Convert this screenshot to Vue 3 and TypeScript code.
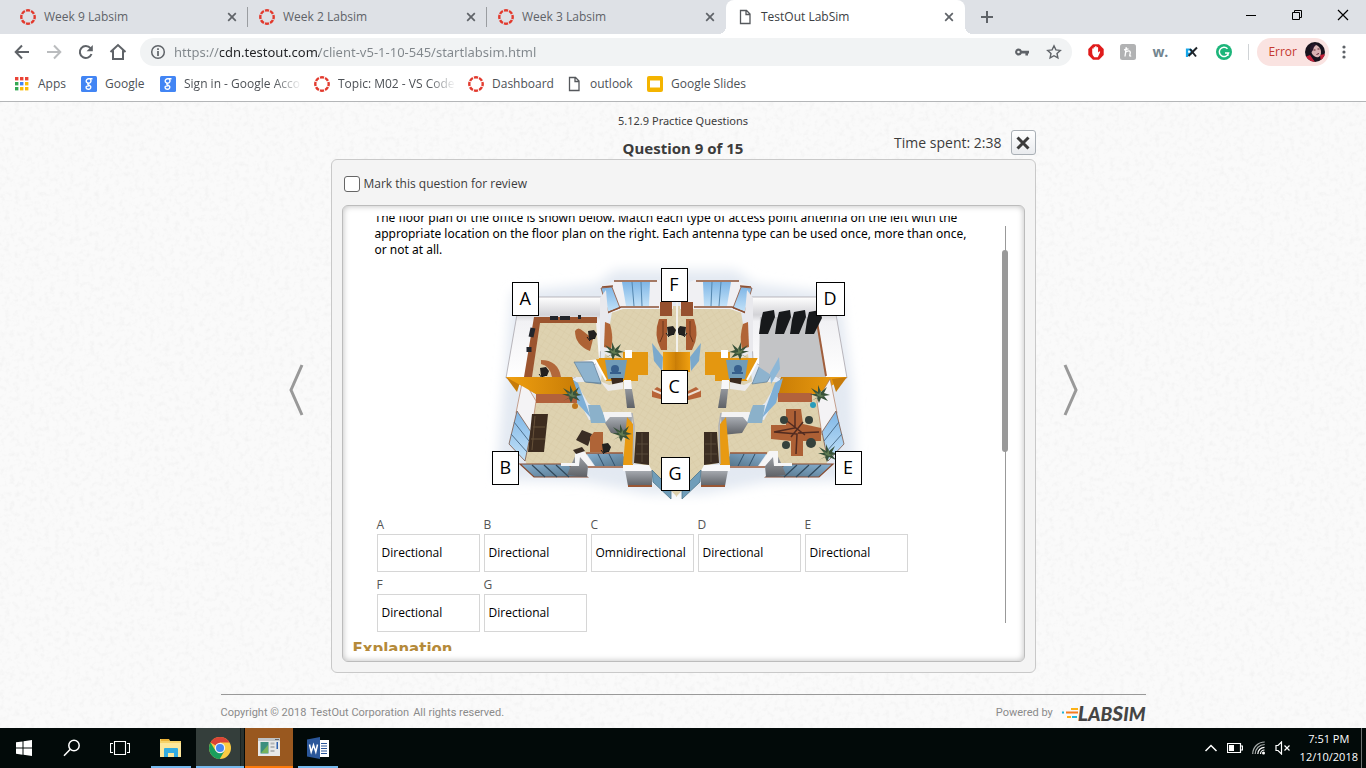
<script setup lang="ts">
import { ref } from 'vue'

interface Tab { title: string; icon: 'canvas' | 'page'; active?: boolean }
interface Bookmark { title: string; icon: string; faded?: boolean }
interface Pin { name: string; x: number; y: number }
interface Answer { slot: string; value: string }

const tabs: Tab[] = [
  { title: 'Week 9 Labsim', icon: 'canvas' },
  { title: 'Week 2 Labsim', icon: 'canvas' },
  { title: 'Week 3 Labsim', icon: 'canvas' },
  { title: 'TestOut LabSim', icon: 'page', active: true },
]
const bookmarks: Bookmark[] = [
  { title: 'Apps', icon: 'apps' },
  { title: 'Google', icon: 'google' },
  { title: 'Sign in - Google Acco', icon: 'google', faded: true },
  { title: 'Topic: M02 - VS Code', icon: 'canvas', faded: true },
  { title: 'Dashboard', icon: 'canvas' },
  { title: 'outlook', icon: 'page' },
  { title: 'Google Slides', icon: 'slides' },
]
const appColors = ['#ea4335', '#ea4335', '#ea4335', '#34a853', '#4285f4', '#fbbc05', '#34a853', '#fbbc05', '#fbbc05']
// Marker offsets on the floor plan canvas
const pins: Pin[] = [
  { name: 'A', x: 27, y: 22 },
  { name: 'B', x: 7, y: 191 },
  { name: 'C', x: 176, y: 110 },
  { name: 'D', x: 331, y: 22 },
  { name: 'E', x: 350, y: 191 },
  { name: 'F', x: 176, y: 8 },
  { name: 'G', x: 176, y: 197 },
]
const answers: Answer[] = [
  { slot: 'A', value: 'Directional' },
  { slot: 'B', value: 'Directional' },
  { slot: 'C', value: 'Omnidirectional' },
  { slot: 'D', value: 'Directional' },
  { slot: 'E', value: 'Directional' },
  { slot: 'F', value: 'Directional' },
  { slot: 'G', value: 'Directional' },
]
const url = ref('https://cdn.testout.com/client-v5-1-10-545/startlabsim.html')
const marked = ref(false)
</script>

<template>
  <div class="screen">
    <svg class="defs" width="0" height="0" aria-hidden="true">
      <symbol id="i-canvas" viewBox="0 0 16 16">
        <circle cx="8" cy="8" r="6.7" fill="none" stroke="#e23a2e" stroke-width="2.4" pathLength="80" stroke-dasharray="7.8 2.2" stroke-dashoffset="-1.1" transform="rotate(22.5 8 8)" />
      </symbol>
      <symbol id="i-page" viewBox="0 0 16 16">
        <path d="M3.5 1.500h6l3.500 3.500v9.500h-9.500zM9 1.500v4h4" fill="#fff" stroke="#55585c" stroke-width="1.3" />
      </symbol>
      <symbol id="i-google" viewBox="0 0 16 16">
        <rect width="16" height="16" rx="1.500" fill="#4285f4" />
        <path d="M11.500 2.800H7.600a2.400 2.200 0 1 0 0 4.400a2.200 2.200 0 0 0 1.600-3.900M7.300 7.200c-1.600 1.300.6 1.700 1.800 2.600c1.700 1.500.2 3.500-1.900 3.500s-3-2.300-1.200-3.100c.8-.4 1.700-.5 2.400-.5" fill="none" stroke="#fff" stroke-width="1.400" />
      </symbol>
      <symbol id="i-slides" viewBox="0 0 16 16">
        <rect width="16" height="16" rx="2" fill="#f4b400" /><rect x="3" y="4.500" width="10" height="7" fill="#fff" />
      </symbol>
      <symbol id="i-close" viewBox="0 0 16 16">
        <path d="M4.200 4.200l7.600 7.600M11.800 4.200l-7.600 7.600" stroke="#5f6368" stroke-width="1.700" />
      </symbol>
    </svg>

    <header class="browser">
      <div class="tabstrip">
        <div v-for="(t, i) in tabs" :key="i" class="tab" :class="{ active: t.active, ruled: i < 2 }">
          <svg class="ico"><use :href="'#i-' + t.icon" /></svg>
          <a class="tab-title" href="#">{{ t.title }}</a>
          <button class="plain" :aria-label="'Close ' + t.title"><svg class="ico"><use href="#i-close" /></svg></button>
        </div>
        <button class="plain newtab" aria-label="New tab">
          <svg width="14" height="14" viewBox="0 0 14 14"><path d="M7 1v12M1 7h12" stroke="#5f6368" stroke-width="2" /></svg>
        </button>
        <div class="wincontrols">
          <button class="plain" aria-label="Minimize"><svg width="12" height="12"><path d="M1 6.500h10" stroke="#000" /></svg></button>
          <button class="plain" aria-label="Restore"><svg width="12" height="12"><path d="M1.500 3.500h7v7h-7zM3.500 3.500v-2h7v7h-2" fill="none" stroke="#000" /></svg></button>
          <button class="plain" aria-label="Close"><svg width="12" height="12"><path d="M1 1l10 10M11 1L1 11" stroke="#000" stroke-width="1.200" /></svg></button>
        </div>
      </div>

      <div class="toolbar">
        <button class="plain nav" aria-label="Back"><svg width="16" height="16"><path d="M15 8H2M8 1.500L1.700 8L8 14.500" fill="none" stroke="#5f6368" stroke-width="2" /></svg></button>
        <button class="plain nav" aria-label="Forward"><svg width="16" height="16"><path d="M1 8h13M8 1.500L14.300 8L8 14.500" fill="none" stroke="#babcbe" stroke-width="2" /></svg></button>
        <button class="plain nav" aria-label="Reload"><svg width="16" height="16"><path d="M13.500 10A6 6 0 1 1 12.500 4.200" fill="none" stroke="#5f6368" stroke-width="2" /><path d="M14.800 1v6.200H8.600z" fill="#5f6368" /></svg></button>
        <button class="plain nav" aria-label="Home"><svg width="18" height="18"><path d="M1.500 9L9 2l7.500 7M4 7.500V16h10V7.500" fill="none" stroke="#5f6368" stroke-width="2" /></svg></button>
        <div class="omnibox">
          <svg width="16" height="16"><circle cx="8" cy="8" r="6.300" fill="none" stroke="#5f6368" stroke-width="1.500" /><path d="M8 4.200v1.800M8 7v5" stroke="#5f6368" stroke-width="1.700" /></svg>
          <input v-model="url" class="url" aria-label="Address" />
          <button class="plain" aria-label="Saved password"><svg width="16" height="16"><path fill-rule="evenodd" d="M4.500 4.500a3.500 3.500 0 0 1 3.300 2.200H15v2.700h-1V11.500h-2.600V9.400H7.800A3.500 3.500 0 1 1 4.500 4.500zm0 2.200a1.300 1.300 0 1 0 0 2.600a1.300 1.300 0 0 0 0-2.600z" fill="#5f6368" /></svg></button>
          <button class="plain" aria-label="Bookmark this page"><svg width="16" height="16"><path d="M8 1.800l1.900 4.100l4.400.5l-3.300 3l.9 4.500L8 11.700l-3.900 2.200l.9-4.500l-3.300-3l4.400-.5z" fill="none" stroke="#5f6368" stroke-width="1.400" /></svg></button>
        </div>
        <div class="extensions">
          <button class="plain" aria-label="Ad blocker"><svg width="16" height="16"><path d="M5 .3h6L15.700 5v6L11 15.700H5L.3 11V5z" fill="#e01b1b" /><path d="M4.200 9V4.800q.7-1 1.400 0V3.400q.8-1 1.500 0v-.8q.8-1 1.500 0v1q.8-1 1.500 0v4.800l1.400-1.200q1.100.3.500 1.200L9.800 13.300H6.300Q4.200 11.500 4.200 9z" fill="#fff" /></svg></button>
          <button class="plain" aria-label="Honey"><svg width="16" height="16"><rect width="16" height="16" rx="2.500" fill="#b1b2b3" /><path d="M6.300 3.200L5 12.500M5.900 8q4-2.400 4.400.4l-.6 3.200q.3.900 1.500.2M4 5.800l4.500-.9" fill="none" stroke="#fff" stroke-width="1.300" /></svg></button>
          <button class="plain" aria-label="Wikibuy"><span class="wletter">w.</span></button>
          <button class="plain" aria-label="px"><svg width="16" height="16"><path d="M3 13V5.500h2.500a2 2 0 0 1 0 4.300H3.500" fill="none" stroke="#18a7ea" stroke-width="2.200" /><path d="M6 5l6 7.500M13 3.500L4.500 12" stroke="#20252a" stroke-width="2" /></svg></button>
          <button class="plain" aria-label="Grammarly"><svg width="16" height="16"><circle cx="8" cy="8" r="8" fill="#1cb57a" /><path d="M11.500 4.700A4.700 4.700 0 1 0 12.600 9H9M12 8.600l-.2 3.400" fill="none" stroke="#fff" stroke-width="1.500" /></svg></button>
        </div>
        <button class="profile">
          <span>Error</span>
          <svg width="20" height="20"><defs><clipPath id="face"><circle cx="10" cy="10" r="10" /></clipPath></defs><g clip-path="url(#face)"><rect width="20" height="20" fill="#18131d" /><path d="M0 15l5-2l5 7H0zM15 13l5-1v6l-4 2z" fill="#c51f38" /><ellipse cx="11" cy="9" rx="4.800" ry="6.500" transform="rotate(-24 11 9)" fill="#dab3b2" /><path d="M5 6q1-5 7-4q-3 2-4 6l-2 3z" fill="#28182a" /><path d="M8.500 8h2M12.500 7h2M11.500 12.500l2.500-1" stroke="#5c2233" /></g></svg>
        </button>
        <button class="plain kebab" aria-label="Menu"><svg width="4" height="16"><circle cx="2" cy="3" r="1.600" fill="#5f6368" /><circle cx="2" cy="8" r="1.600" fill="#5f6368" /><circle cx="2" cy="13" r="1.600" fill="#5f6368" /></svg></button>
      </div>

      <nav class="bookmarks">
        <a v-for="b in bookmarks" :key="b.title" href="#" class="bookmark">
          <svg v-if="b.icon === 'apps'" class="ico" viewBox="0 0 16 16">
            <rect v-for="(c, i) in appColors" :key="i" :x="1 + (i % 3) * 5" :y="1 + Math.floor(i / 3) * 5" width="3.400" height="3.400" :fill="c" />
          </svg>
          <svg v-else class="ico"><use :href="'#i-' + b.icon" /></svg>
          <span :class="{ faded: b.faded }">{{ b.title }}</span>
        </a>
      </nav>
    </header>

    <main class="page">
      <svg class="grain" aria-hidden="true">
        <filter id="paper"><feTurbulence type="fractalNoise" baseFrequency="0.2" numOctaves="3" seed="4" /><feColorMatrix values="0 0 0 0 0.5  0 0 0 0 0.5  0 0 0 0 0.5  0.26 0 0 0 -0.12" /></filter>
        <rect width="100%" height="100%" filter="url(#paper)" />
      </svg>
      <div class="stage">
        <button class="plain arrow" aria-label="Previous question"><svg width="16" height="52"><path d="M14 1L3 26l11 25" fill="none" stroke="#999" stroke-width="3" /></svg></button>
        <section class="quiz">
          <div class="heading">
            <div class="titles"><div class="crumb">5.12.9 Practice Questions</div><h1>Question 9 of 15</h1></div>
            <div class="timer">
              <span>Time spent: 2:38</span>
              <button class="closebox" aria-label="Close"><svg width="14" height="14"><path d="M1.500 1.500l11 11M12.500 1.500l-11 11" stroke="#3c3c3c" stroke-width="3" /></svg></button>
            </div>
          </div>
          <div class="panel">
            <label class="review"><input v-model="marked" type="checkbox" /><span>Mark this question for review</span></label>
            <div class="card">
              <div class="content">
                <p>The floor plan of the office is shown below. Match each type of access point antenna on the left with the appropriate location on the floor plan on the right. Each antenna type can be used once, more than once, or not at all.</p>
                <div class="plan">
                  <svg class="plan-art" width="390" height="245" viewBox="485 260 390 245">
                    <defs>
                      <filter id="soft" x="-10%" y="-10%" width="120%" height="120%"><feGaussianBlur stdDeviation="6" /></filter>
                      <linearGradient id="wall" x1="0" y1="0" x2="0" y2="1"><stop offset="0" stop-color="#fff" /><stop offset=".22" stop-color="#d3d3d7" /><stop offset=".3" stop-color="#f1f1f4" /><stop offset="1" stop-color="#fff" /></linearGradient>
                      <linearGradient id="steel" x1="0" y1="0" x2="0" y2="1"><stop offset="0" stop-color="#a9adb3" /><stop offset="1" stop-color="#5f6267" /></linearGradient>
                      <linearGradient id="glass" x1="0" y1="0" x2="0" y2="1"><stop offset="0" stop-color="#7fb6e6" /><stop offset="1" stop-color="#c3e2f8" /></linearGradient>
                      <linearGradient id="dim" x1="0" y1="0" x2="1" y2="1"><stop offset="0" stop-color="#86b0d1" /><stop offset="1" stop-color="#557489" /></linearGradient>
                      <linearGradient id="amber" x1="0" y1="0" x2="1" y2="0"><stop offset="0" stop-color="#f0a010" /><stop offset="1" stop-color="#c87c06" /></linearGradient>
                      <pattern id="tile" width="6" height="6" patternUnits="userSpaceOnUse" patternTransform="rotate(32)"><rect width="6" height="6" fill="#ded2b0" /><path d="M0 0h6M0 0v6" stroke="#d2c5a0" stroke-width=".7" /></pattern>
                      <g id="plant"><path d="M0 0l-8-3l6 0l-5-6l7 4l0-7l3 7l6-5l-3 6l6 2l-6 1l4 5l-7-3l-2 5l-2-5l-6 3z" fill="#38523a" /><path d="M0-1l-3-4l4 2l2-4l0 5l4 1l-4 1z" fill="#5f7a52" /></g>
                      <g id="chair"><path d="M-4-4l6-1l3 4l-2 5l-6 0z" fill="#23211f" /><path d="M-3 5l6-2M-5 2l3 4" stroke="#15181b" /></g>
                      <g id="half">
                        <!-- corner office -->
                        <path d="M520 297h83l-3 64l-26 17h-68z" fill="url(#wall)" stroke="#a9a6ac" stroke-width=".8" />
                        <!-- lobby and inner office floors -->
                        <path d="M612 312l15-6h50v80h-77l6-38z" fill="url(#tile)" />
                        <path d="M576 382h101v115l-29-31l-14-3l-2-50h-29l-15-10z" fill="url(#tile)" />
                        <!-- lower office -->
                        <path d="M536 395h40l13 25h16l27 17v18h-50l-10 10h-45l-3-7l8-33z" fill="url(#tile)" />
                        <!-- central office windows -->
                        <path d="M602 287l14-7h43l14 7v22h-50l-15 5z" fill="#f0f0f3" />
                        <path d="M601 288l11-1l8 21l-12 4z" fill="url(#glass)" stroke="#8f5133" stroke-width=".8" />
                        <path d="M622 282h28l-1 24h-23z" fill="url(#glass)" />
                        <path d="M632 282l2 24M641 282l1 24" stroke="#5587af" stroke-width="1" />
                        <path d="M614 281h43M602 287l11-1M607 313l14-6h38" fill="none" stroke="#8b5034" stroke-width="1.500" />
                        <path d="M600 298l6-8l6 68l-12-7z" fill="#e9e9ed" />
                        <path d="M605 322l5 2q4 13 1 25l-7-2z" fill="#b16537" />
                        <rect x="660" y="302" width="12" height="14" fill="#96502e" />
                        <path d="M659 319h8v31h-6q-8-15-2-31z" fill="#a85a30" /><path d="M663 321v14l-3 7" stroke="#6b361c" fill="none" />
                        <use href="#chair" x="671" y="331" />
                        <!-- amber partitions -->
                        <path d="M595 358h28v-6h25v23h-10v6h-32z" fill="#e49710" />
                        <path d="M605 360h22l-3 19h-16z" fill="#719cb8" /><circle cx="615" cy="369" r="4" fill="#365f8d" /><path d="M610 373h11" stroke="#365f8d" stroke-width="2" />
                        <path d="M594 358l12 22" stroke="#fff" stroke-width="2" />
                        <rect x="625" y="350" width="7" height="8" fill="#fff" />
                        <use href="#plant" x="612" y="354" />
                        <path d="M652 343l11 14l-1 14l-8-10z" fill="#7ba9cc" />
                        <rect x="663" y="352" width="15" height="20" fill="url(#amber)" />
                        <path d="M574 362h18l9 22l-15-2z" fill="#8eb3ce" stroke="#58748c" stroke-width=".6" />
                        <path d="M611 378h12v10h-10z" fill="#3b2a20" />
                        <path d="M600 381l9 4l14-3v7l-15 2z" fill="#eceae9" />
                        <!-- amber divider between the corner offices -->
                        <path d="M506 377h66l6 17h-42l-14-8z" fill="url(#amber)" />
                        <path d="M506 377l15 2l-4 13z" fill="#c77b0a" />
                        <path d="M570 378l8 5l13 35l-14-15z" fill="#7eafd7" />
                        <path d="M523 379l13 22l-5 34l-15-22l5-25z" fill="#f4f3f5" stroke="#a86a48" stroke-width=".6" />
                        <path d="M517 411l14 21l-6 29l-16-17z" fill="url(#glass)" stroke="#7c5848" stroke-width=".8" />
                        <path d="M514 422l15 19M511 434l16 18" stroke="#4f718e" stroke-width="1" />
                        <path d="M588 405h12l7 18h-16z" fill="#8bb1ca" />
                        <path d="M624 381l7 2l4 25h-8z" fill="url(#steel)" /><path d="M624 380h7l1 9h-8z" fill="#f7f7f8" />
                        <path d="M603 412h28l2 6h-22l-5 5z" fill="#f3f3f4" /><path d="M610 417h22l-1 18l-20-2l-6-10z" fill="url(#steel)" />
                        <path d="M520 464h47l20 13h-53z" fill="url(#dim)" stroke="#874b30" stroke-width="1.200" />
                        <path d="M532 465l13 12M544 465l13 12M556 465l13 12" stroke="#31495b" stroke-width="1.200" />
                        <path d="M577 452l11 14l-1 11l-20-2l5-12z" fill="url(#steel)" /><path d="M561 463h14v-12h9l10 15h-6l-8-9l-1 9h-18z" fill="#f5f5f6" />
                        <path d="M586 453h37l3 13h-31z" fill="url(#dim)" /><path d="M586 453h37M588 467h36" stroke="#9b5838" stroke-width="1.300" /><path d="M598 454l6 12M609 454l6 12" stroke="#304f69" />
                        <path d="M627 417l6 7v41h-10z" fill="#e89a12" /><path d="M632 413l2 13l-1 38" fill="none" stroke="#afb1b5" stroke-width="1.500" />
                        <path d="M636 432h13v33l-15-2z" fill="#3b2d22" /><path d="M642 433v29M637 444h11M636 454h12" stroke="#60503f" stroke-width=".8" />
                        <path d="M625 470h27v16h-24z" fill="url(#steel)" /><path d="M623 465h26l3 6h-29z" fill="#f8f8f9" /><path d="M628 486h24" stroke="#9b5734" stroke-width="2" />
                        <path d="M652 470l10 10l9 10v9l-18-17z" fill="#6f9dba" stroke="#4e7589" stroke-width=".8" />
                        <path d="M652 391l5-4l20 10v6l-25-6z" fill="#b86438" /><path d="M653 390l12 5" stroke="#ece1d5" stroke-width="2" />
                      </g>
                    </defs>
                    <path d="M512 292l85-8l18-14h120l20 14l85 10l12 90l4 96l-90 2l-62 12h-56l-62-12l-90-2l8-96z" fill="#e3e9f2" filter="url(#soft)" />
                    <use href="#half" />
                    <use href="#half" transform="translate(1353 0) scale(-1 1)" />
                    <path d="M677 302v50" stroke="#f3f1ec" stroke-width="2" />
                    <!-- office A -->
                    <path d="M539 322h57l3 37l-24 3l8 15h-56z" fill="url(#tile)" />
                    <path d="M534 317h63v6h-57l-8 54h-8z" fill="#9c552f" />
                    <path d="M550 318h8M560 318h10M578 317h3" stroke="#22252b" stroke-width="4" /><path d="M533 328l-2 9M529 347v5" stroke="#22252b" stroke-width="5" />
                    <path d="M575 331q3-5 8 0l10 8l-3 12q-15-6-15-20z" fill="#ad6235" /><use href="#chair" x="592" y="335" />
                    <path d="M541 360q17 0 20 17h-9q-2-11-11-13z" fill="#b2683b" /><use href="#chair" x="544" y="372" />
                    <path d="M574 362h19l8 21l-16-1z" fill="#8eb3ce" stroke="#58748c" stroke-width=".6" />
                    <path d="M506 377h66l6 17h-42l-14-8z" fill="url(#amber)" />
                    <!-- office D -->
                    <path d="M760 317h57l9 60h-52l-15-10z" fill="#c3c4c6" />
                    <path d="M817 322l9 54" stroke="#a15f3d" stroke-width="2" />
                    <path d="M763 312l11-2l1 7l-7 17h-9l2-14zM779 312l11-2l1 7l-7 17h-9l2-14zM794 312l11-2l1 7l-7 17h-9l2-14zM809 312l11-2l2 8l-8 16h-9l2-14z" fill="#17191b" />
                    <path d="M779 357l1 12l-9 15l-1-11z" fill="#8db7d7" />
                    <!-- office B furniture -->
                    <path d="M532 414h16l-4 38h-16z" fill="#3d2c1f" /><path d="M535 416l-3 34M533 427h12M531 439h14" stroke="#655039" />
                    <path d="M536 394h41v9h-41z" fill="#b2623c" /><use href="#plant" x="570" y="397" /><circle cx="575" cy="406" r="3" fill="#bf751b" />
                    <path d="M582 430l10 4l-4 12l-12-6z" fill="#3a2d24" /><path d="M590 437l4-5h9v20h-13z" fill="#af6437" /><use href="#chair" x="606" y="448" /><use href="#plant" x="620" y="436" />
                    <path d="M573 450l9-3l3 4l-9 3z" fill="#3a2d24" />
                    <!-- office E furniture -->
                    <path d="M778 393h34v9h-34z" fill="#b2623c" /><use href="#plant" x="818" y="397" /><circle cx="813" cy="405" r="3" fill="#2b9cba" />
                    <path d="M786 409h15l2 15l18 4v13h-18v15h-12v-15l-20-2v-14h15z" fill="#ad6035" />
                    <path d="M795 411v17l-21 4l23 2l-1 20M798 433l21-1M787 421l18 14M803 422l-12 15" stroke="#512b20" stroke-width="1.500" fill="none" />
                    <g fill="#35413b"><circle cx="784" cy="420" r="4" /><circle cx="809" cy="420" r="4" /><circle cx="786" cy="445" r="4" /><circle cx="811" cy="443" r="5" /></g>
                    <use href="#plant" x="826" y="456" />
                  </svg>
                  <span v-for="p in pins" :key="p.name" class="pin" :style="{ left: p.x + 'px', top: p.y + 'px' }">{{ p.name }}</span>
                </div>
                <div class="answers">
                  <div v-for="a in answers" :key="a.slot" class="answer"><span class="slot">{{ a.slot }}</span><div class="drop">{{ a.value }}</div></div>
                </div>
                <h2>Explanation</h2>
              </div>
              <div class="rail"><div class="thumb"></div></div>
            </div>
          </div>
        </section>
        <button class="plain arrow" aria-label="Next question"><svg width="16" height="52"><path d="M2 1l11 25L2 51" fill="none" stroke="#999" stroke-width="3" /></svg></button>
      </div>
      <footer class="foot">
        <span class="copy"><span>Copyright © 2018</span><span>TestOut Corporation</span><span>All rights reserved.</span></span>
        <span class="powered">Powered by
          <span class="logo"><svg width="16" height="14"><path d="M0 6.500h2" stroke="#20b5d8" stroke-width="2" /><path d="M9 3h7" stroke="#fbb116" stroke-width="2" /><path d="M4 6.500h12" stroke="#f47b20" stroke-width="2" /><path d="M5 11h4" stroke="#fbb116" stroke-width="2" /><path d="M10 11h5" stroke="#20b5d8" stroke-width="2" /></svg><b><i>L</i>AB<i>S</i>IM</b></span>
        </span>
      </footer>
    </main>

    <div class="taskbar">
      <button class="task" aria-label="Start"><svg width="16" height="16"><path d="M0 2.300L6.500 1.400v6.200H0zM7.500 1.200L16 0v7.600H7.500zM0 8.500h6.500v6.200L0 13.800zM7.500 8.500H16V16l-8.500-1.200z" fill="#fff" /></svg></button>
      <button class="task" aria-label="Search"><svg width="18" height="18"><circle cx="11" cy="6.500" r="5.200" fill="none" stroke="#fff" stroke-width="1.500" /><path d="M7.300 10.300L1 16.700" stroke="#fff" stroke-width="1.600" /></svg></button>
      <button class="task" aria-label="Task view"><svg width="20" height="14"><path d="M4.500.5h11v13h-11zM3 2.500H.5v9H3M17 2.500h2.500v9H17" fill="none" stroke="#fff" stroke-width="1.100" /></svg></button>
      <button class="task open" aria-label="File Explorer"><svg width="22" height="20"><path d="M0 1h9l1 2h11v16H0z" fill="#f7d36a" /><path d="M0 5h21v14H0z" fill="#fde79b" /><path d="M1 2h8" stroke="#e8a928" stroke-width="1.500" /><path d="M4 19v-8q0-1 1-1h12q1 0 1 1v8h-4v-4H8v4z" fill="#34ace0" /></svg></button>
      <button class="task open running" aria-label="Chrome"><svg width="22" height="22" viewBox="0 0 22 22"><circle cx="11" cy="11" r="11" fill="#fbcb43" /><path d="M11 11L1.500 5.500A11 11 0 0 1 20.600 5.600H11z" fill="#da4437" /><path d="M1.500 5.500A11 11 0 0 0 10.800 22l4.700-8.300L11 11L6.500 13.700z" fill="#1a9e5c" /><circle cx="11" cy="11" r="5.200" fill="#f3f3f3" /><circle cx="11" cy="11" r="4" fill="#4587f3" /></svg></button>
      <button class="task alert" aria-label="LabSim"><svg width="22" height="18"><rect width="22" height="18" fill="#e7e8e8" /><path d="M0 0h22v3H0z" fill="#bfc3c5" /><path d="M17 1.500h4" stroke="#666" /><rect x="2.500" y="4" width="8" height="11.500" fill="#3b8f7e" /><path d="M3 15l7-8v8z" fill="#76b35c" /><path d="M12.500 5.500h4M12.500 9h4M12.500 13h4" stroke="#b3b6b8" stroke-width="2" /><rect x="18.500" y="4" width="1.500" height="7" fill="#2f62b0" /></svg></button>
      <button class="task open" aria-label="Word"><svg class="word" width="22" height="22"><path d="M11 3h11v17H11z" fill="#fff" /><path d="M14 6.500h6M14 9h6M14 11.500h6M14 14h6M14 16.500h6" stroke="#2b579a" stroke-width="1.200" /><path d="M0 2.500L13 0v22L0 19.500z" fill="#2b579a" /><path d="M2.500 7.500l1.700 7.500l2.300-7l2.300 7l1.700-7.500" fill="none" stroke="#fff" stroke-width="1.500" /></svg></button>
      <div class="tray">
        <button class="plain" aria-label="Show hidden icons"><svg width="14" height="10"><path d="M1.500 8L7 2.500L12.500 8" fill="none" stroke="#fff" stroke-width="1.500" /></svg></button>
        <button class="plain" aria-label="Battery"><svg width="16" height="10"><path d="M.5.500h13v9H.500zM14 3h1.500v4H14" fill="none" stroke="#fff" stroke-width="1.200" /><rect x="2" y="2" width="5" height="6" fill="#fff" /></svg></button>
        <button class="plain" aria-label="Network"><svg width="14" height="14"><g fill="none"><path d="M8.500 13a4 4 0 0 1 4-4M5.800 13a6.700 6.700 0 0 1 6.700-6.700" stroke="#fff" stroke-width="1.200" /><path d="M3.200 13a9.500 9.500 0 0 1 9.500-9.500M.7 13A12 12 0 0 1 12.700 1" stroke="#a8adac" stroke-width="1.200" /></g><circle cx="11.500" cy="12" r="1.500" fill="#fff" /></svg></button>
        <button class="plain" aria-label="Volume muted"><svg width="16" height="14"><path d="M1 4.500h2L6.500 1v12L3 9.500H1z" fill="none" stroke="#fff" stroke-width="1.200" /><path d="M9.500 4.500l5 5M14.500 4.500l-5 5" stroke="#fff" stroke-width="1.200" /></svg></button>
        <button class="clock"><span>7:51 PM</span><span>12/10/2018</span></button>
      </div>
    </div>
  </div>
</template>

<style>
body { margin: 0; }
</style>

<style scoped>
.screen { display: flex; flex-direction: column; height: 100vh; overflow: hidden; background: #fff; font: 12px/16px "Open Sans", "Noto Sans", sans-serif; color: #3c4043; }
.screen * { box-sizing: border-box; }
.defs { position: absolute; }
svg { display: block; flex: none; }
.ico { width: 16px; height: 16px; }
a { color: inherit; text-decoration: none; }
button { font: inherit; color: inherit; cursor: pointer; }
.plain { display: flex; align-items: center; justify-content: center; padding: 0; border: 0; background: none; }

.tabstrip { display: flex; height: 34px; padding-left: 9px; background: #dee1e6; }
.tab { position: relative; display: flex; align-items: center; flex: 0 1 239px; gap: 8px; padding: 0 8px 0 11px; color: #5f6368; }
.tab-title { flex: 1; white-space: nowrap; }
.tab.ruled::after { content: ""; position: absolute; right: 0; top: 7px; width: 1px; height: 20px; background: #9a9da1; }
.tab.active { background: #fff; color: #3c4043; border-radius: 8px 8px 0 0; }
.tab.active::before, .tab.active::after { content: ""; position: absolute; bottom: 0; width: 8px; height: 8px; }
.tab.active::before { left: -8px; background: radial-gradient(circle at 0 0, #dee1e6 8px, #fff 8px); }
.tab.active::after { right: -8px; background: radial-gradient(circle at 100% 0, #dee1e6 8px, #fff 8px); }
.newtab { width: 28px; margin-left: 8px; }
.wincontrols { display: flex; height: 29px; margin-left: auto; }
.wincontrols button { width: 46px; }

.toolbar { display: flex; align-items: center; height: 36px; padding: 0 12px 0 6px; }
.nav { width: 32px; }
.omnibox { display: flex; align-items: center; flex: 1; gap: 8px; height: 28px; margin-left: 6px; padding: 0 10px; border-radius: 14px; background: #f1f3f4; }
.omnibox button { margin-left: 8px; }
.url { flex: 1; min-width: 0; padding: 0; border: 0; outline: 0; font: 13px/20px "Noto Sans", "Open Sans", sans-serif; color: transparent; background: linear-gradient(90deg, #80868b 46px, #202124 46px 145px, #80868b 145px); -webkit-background-clip: text; background-clip: text; }
.extensions { display: flex; gap: 16px; margin-left: 16px; padding-right: 16px; border-right: 1px solid #d0d3d6; }
.extensions button { width: 16px; height: 16px; }
.wletter { font: bold 14px/16px "Open Sans", sans-serif; color: #72858f; }
.profile { display: flex; align-items: center; gap: 8px; height: 28px; margin-left: 8px; padding: 0 4px 0 11px; border: 0; border-radius: 14px; background: #fae3e1; color: #c5392f; }
.kebab { width: 20px; margin-left: 5px; }

.bookmarks { display: grid; grid-template-columns: 67px 79px 154px 154px 98px 81px 1fr; align-items: center; height: 32px; padding: 0 14px 4px; border-bottom: 1px solid #b4b6b8; color: #4d5156; }
.bookmark { display: flex; align-items: center; gap: 8px; white-space: nowrap; }
.faded { -webkit-mask-image: linear-gradient(90deg, #000 90px, transparent 118px); mask-image: linear-gradient(90deg, #000 90px, transparent 118px); }

.page { position: relative; display: flex; flex: 1; flex-direction: column; align-items: center; min-height: 0; background: #fafafa; color: #3c3c3c; }
.grain { position: absolute; inset: 0; width: 100%; height: 100%; }
.stage { position: relative; display: flex; flex: 1; align-items: center; justify-content: center; gap: 27px; width: 100%; min-height: 0; }
.arrow { margin-top: 4px; }
.quiz { display: flex; flex-direction: column; flex: 0 1 705px; height: 100%; }
.heading { display: grid; grid-template-columns: 1fr auto 1fr; padding-top: 11px; height: 57px; flex: none; }
.titles { grid-column: 2; text-align: center; font-family: "Noto Sans", "Open Sans", sans-serif; }
.crumb { font-size: 11px; }
h1 { margin: 7px 0 0; font-size: 15px; line-height: 24px; font-weight: bold; }
.timer { display: flex; align-items: flex-start; justify-content: flex-end; gap: 9px; padding-top: 17px; font-size: 14px; line-height: 26px; }
.closebox { display: flex; align-items: center; justify-content: center; width: 25px; height: 25px; padding: 0; border: 1px solid #a9afb5; border-radius: 3px; background: linear-gradient(#fff, #e9ebee); }
.panel { display: flex; flex: 1; flex-direction: column; min-height: 0; padding: 16px 10px 10px; border: 1px solid #c9c9c9; border-radius: 6px; background: #f4f4f4; }
.review { display: flex; align-items: center; gap: 4px; height: 16px; margin: 0 2px 13px; }
.review input { appearance: none; width: 16px; height: 16px; margin: 0; border: 1px solid #666; border-radius: 3px; background: #fff; }
.review input:checked { background: #666; }
.card { display: flex; flex: 1; min-height: 0; padding: 10px 15px 10px 10px; border: 1px solid #bcbcbc; border-radius: 6px; background: #fff; box-shadow: inset 0 0 6px #bbb; }
.content { flex: 1; min-width: 0; overflow: hidden; color: #000; }
p { margin: -6px 24px 0 22px; font-family: "Noto Sans", "Open Sans", sans-serif; }
.plan { position: relative; width: 390px; height: 245px; margin: 2px auto 0 132px; }
.pin { position: absolute; min-width: 27px; height: 34px; padding: 0 7px; border: 1px solid #000; background: #fff; font: 18px/30px "Open Sans", "Noto Sans", sans-serif; text-align: center; }
.answers { display: flex; flex-wrap: wrap; gap: 5px 4px; width: 540px; margin: 12px 0 0 24px; }
.answer { width: 103px; }
.slot { display: block; height: 17px; font-size: 12px; line-height: 16px; color: #555; }
.drop { height: 38px; padding: 0 4px; border: 1px solid #d6d6d6; line-height: 36px; }
h2 { margin: 6px 0 0; font: bold 15px/22px "DejaVu Sans", sans-serif; color: #b58a3a; }
.rail { display: flex; justify-content: center; width: 7px; margin: 10px 0 28px; background: linear-gradient(#999, #999) center / 1px 100% no-repeat; }
.thumb { width: 6px; height: 51%; margin-top: 24px; border-radius: 3px; background: #999; }

.foot { position: relative; display: flex; justify-content: space-between; width: 68%; max-width: 925px; height: 34px; margin-top: 21px; padding-top: 10px; border-top: 1px solid #999; color: #8b8b8b; font-size: 11px; }
.copy { display: flex; gap: 4px; font-family: Roboto, sans-serif; }
.powered { display: flex; gap: 9px; font: 11px/16px Roboto, sans-serif; }
.logo { display: flex; align-items: center; height: 16px; color: #444; }
.logo b { font: italic 900 19px/16px Lato, sans-serif; }
.logo b i { font-size: 21px; }

.taskbar { display: flex; height: 40px; flex: none; background: #020a09; color: #fff; }
.task { display: flex; align-items: center; justify-content: center; width: 48px; margin-right: 1px; padding: 0; border: 0; border-bottom: 3px solid transparent; background: none; }
.task:nth-child(-n+3) { margin-right: 0; border-bottom: 0; }
.task.open { background: linear-gradient(#76b9ed, #76b9ed) center bottom / 40px 2px no-repeat; border-bottom: 0; }
.task.open:nth-child(4) { margin-left: 3px; }
.task.running { background: linear-gradient(#76b9ed, #76b9ed) center bottom / 100% 2px no-repeat, linear-gradient(90deg, #343e3b 44px, #18211f 44px 45px, #2a3330 45px); }
.task.alert { background: #99581f; border-bottom: 2px solid #ff7a0a; }
.tray { display: flex; align-items: center; gap: 9px; margin-left: auto; padding-right: 4px; }
.tray .plain { height: 100%; }
.clock { display: flex; flex-direction: column; align-items: center; height: 100%; padding: 2px 3px 0 0; border: 0; border-right: 1px solid #6c7271; background: none; font-size: 11px; line-height: 18px; }
</style>
